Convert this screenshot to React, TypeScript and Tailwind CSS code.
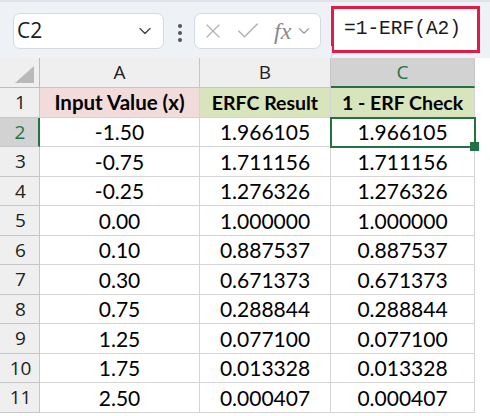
import React from 'react';
import { ChevronDown, X, Check } from 'lucide-react';

const rows: [string, string, string][] = [
  ['-1.50', '1.966105', '1.966105'],
  ['-0.75', '1.711156', '1.711156'],
  ['-0.25', '1.276326', '1.276326'],
  ['0.00', '1.000000', '1.000000'],
  ['0.10', '0.887537', '0.887537'],
  ['0.30', '0.671373', '0.671373'],
  ['0.75', '0.288844', '0.288844'],
  ['1.25', '0.077100', '0.077100'],
  ['1.75', '0.013328', '0.013328'],
  ['2.50', '0.000407', '0.000407'],
];

// rows alternate 30/29 px in the capture
const rowHeights = ['h-[30px]', 'h-[29px]'];

const cellFont = { fontFamily: 'Lato, "Open Sans", sans-serif' };
const uiFont = { fontFamily: '"Open Sans", sans-serif' };

const App: React.FC = () => {
  return (
    <div className="w-[490px] h-[416px] overflow-hidden bg-white relative" style={cellFont}>
      {/* formula bar */}
      <div className="h-[58px] bg-[#eef1f5] border-t-2 border-[#dfe2e6] flex items-start relative">
        <div className="mt-[11px] ml-[13px] w-[151px] h-[36px] bg-white border border-[#d6d9dd] rounded-[7px] flex items-center justify-between pl-[3px] pr-[8px]">
          <span className="text-[21px] text-[#1a1a1a]" style={uiFont}>C2</span>
          <ChevronDown size={20} strokeWidth={1.6} className="text-[#444]" />
        </div>
        <div className="mt-[22px] ml-[14px] flex flex-col gap-[3px]">
          <span className="w-[4px] h-[4px] rounded-full bg-[#555]" />
          <span className="w-[4px] h-[4px] rounded-full bg-[#555]" />
          <span className="w-[4px] h-[4px] rounded-full bg-[#555]" />
        </div>
        <div className="mt-[11px] ml-[12px] w-[127px] h-[36px] bg-white border border-[#d6d9dd] rounded-[7px] flex items-center pl-[6px]">
          <X size={24} strokeWidth={1.3} className="text-[#b3b3b3]" />
          <Check size={28} strokeWidth={1.3} className="text-[#b3b3b3] ml-[9px]" />
          <span className="ml-[12px] text-[24px] italic text-[#8a8a8a] leading-none" style={{ fontFamily: '"Liberation Serif", serif' }}>fx</span>
          <ChevronDown size={18} strokeWidth={1.5} className="text-[#999] ml-[4px]" />
        </div>
        <div className="absolute left-[331px] top-[44px] w-px h-[14px] bg-[#d9dce0]" />
        <div className="mt-[4px] ml-[10px] w-[149px] h-[47px] bg-white border-[3px] border-[#e01c48] flex items-center pl-[10px]">
          <span className="text-[19.5px] text-[#1a1a1a]" style={{ fontFamily: '"Liberation Mono", monospace' }}>=1-ERF(A2)</span>
        </div>
      </div>

      {/* column headers */}
      <div className="flex h-[30px] bg-[#efefef]" style={uiFont}>
        <div className="w-[40px] border-r border-b border-[#bdbdbd] relative">
          <div className="absolute right-[5px] bottom-[4px] w-0 h-0 border-l-[19px] border-l-transparent border-b-[17px] border-b-[#b9b9b9]" />
        </div>
        <div className="w-[160px] border-r border-b border-[#c6c6c6] flex items-center justify-center text-[19px] text-[#222]">A</div>
        <div className="w-[131px] border-r border-b border-[#c6c6c6] flex items-center justify-center text-[19px] text-[#222]">B</div>
        <div className="w-[144px] bg-[#d2d2d2] border-r border-[#c6c6c6] border-b-2 border-b-[#217346] flex items-center justify-center text-[19px] text-[#217346]">C</div>
        <div className="flex-1 bg-white" />
      </div>

      {/* header row */}
      <div className="flex h-[30px]">
        <div className="w-[40px] bg-[#efefef] border-r border-b border-[#c6c6c6] flex items-center justify-center pl-[2px] text-[19px] text-[#222]" style={uiFont}>1</div>
        <div className="w-[160px] bg-[#f2dcdb] border-r border-b border-[#d4d4d4] flex items-center justify-center text-[20.5px] font-bold text-black">Input Value (x)</div>
        <div className="w-[131px] bg-[#d8e4bc] border-r border-b border-[#d4d4d4] flex items-center justify-center text-[19.5px] font-bold text-black">ERFC Result</div>
        <div className="w-[144px] bg-[#d8e4bc] border-r border-b border-[#d4d4d4] flex items-center justify-center text-[19.5px] font-bold text-black">1 - ERF Check</div>
      </div>

      {rows.map((r, i) => {
        const selected = i === 0;
        return (
          <div key={i} className={`flex ${rowHeights[(i + 1) % 2]}`}>
            <div
              className={`w-[40px] border-b border-[#c6c6c6] flex items-center justify-center pl-[2px] text-[19px] ${
                selected
                  ? 'bg-[#d2d2d2] text-[#217346] border-r-2 border-r-[#217346]'
                  : 'bg-[#efefef] text-[#222] border-r border-r-[#c6c6c6]'
              }`}
              style={uiFont}
            >
              {i + 2}
            </div>
            <div className="w-[160px] border-r border-b border-[#d4d4d4] flex items-center justify-center text-[21px] text-black">{r[0]}</div>
            <div className="w-[131px] border-r border-b border-[#d4d4d4] flex items-center justify-center text-[21px] text-black">{r[1]}</div>
            <div className="w-[144px] border-r border-b border-[#d4d4d4] flex items-center justify-center text-[21px] text-black relative">
              {r[2]}
              {selected && (
                <>
                  <div className="absolute -left-px -top-px w-[146px] h-[31px] border-2 border-[#217346]" />
                  <div className="absolute -right-[5px] -bottom-[5px] w-[9px] h-[9px] bg-[#217346] z-10" />
                </>
              )}
            </div>
          </div>
        );
      })}
    </div>
  );
};

export default App;
